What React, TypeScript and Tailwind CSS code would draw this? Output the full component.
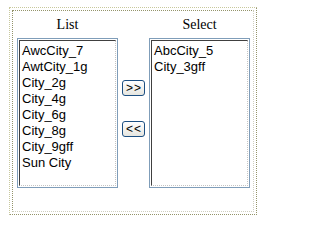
import React from 'react';

const listItems = ['AwcCity_7', 'AwtCity_1g', 'City_2g', 'City_4g', 'City_6g', 'City_8g', 'City_9gff', 'Sun City'];
const selectItems = ['AbcCity_5', 'City_3gff'];

const Column: React.FC<{ title: string; items: string[] }> = ({ title, items }) => (
    <div className="w-[101px] flex flex-col">
        <div className="h-[18px] leading-[18px] text-[14px] text-center text-black mb-[4px] font-['Liberation_Serif',serif]">
            {title}
        </div>
        <div className="h-[150px] border border-[#7f9db9] p-px bg-white">
            <div className="h-full border border-t-[#404040] border-l-[#404040] border-r-[#c4c4c4] border-b-[#c4c4c4] [border-right-style:dotted] [border-bottom-style:dotted] pl-[2px] pt-[2px]">
                {items.map((item) => (
                    <div key={item} className="text-[13px] leading-[16px] text-black font-['Liberation_Sans',Arial,sans-serif] whitespace-nowrap">
                        {item}
                    </div>
                ))}
            </div>
        </div>
    </div>
);

const MoveButton: React.FC<{ label: string }> = ({ label }) => (
    <button className="w-[23px] h-[16px] rounded-[3px] border border-[#1c4f82] bg-gradient-to-b from-white to-[#e6e6e0] flex items-center justify-center text-[12px] leading-none tracking-[1px] text-black font-['Liberation_Sans',Arial,sans-serif] pl-px">
        {label}
    </button>
);

export default function App() {
    return (
        <div className="w-[268px] h-[226px] bg-white pl-[9px] pt-[7px]">
            <div className="w-[248px] h-[208px] border border-dotted border-t-[#c8c89c] border-l-[#c8c89c] border-r-[#94946a] border-b-[#94946a] p-[2px]">
                <div className="h-full border border-dotted border-t-[#94946a] border-l-[#94946a] border-r-[#cfcfbf] border-b-[#cfcfbf] pl-[4px] pt-[5px] flex">
                    <Column title="List" items={listItems} />
                    <div className="w-[23px] mx-[4px] pt-[64px] flex flex-col gap-[25px]">
                        <MoveButton label=">>" />
                        <MoveButton label="<<" />
                    </div>
                    <Column title="Select" items={selectItems} />
                </div>
            </div>
        </div>
    );
}
